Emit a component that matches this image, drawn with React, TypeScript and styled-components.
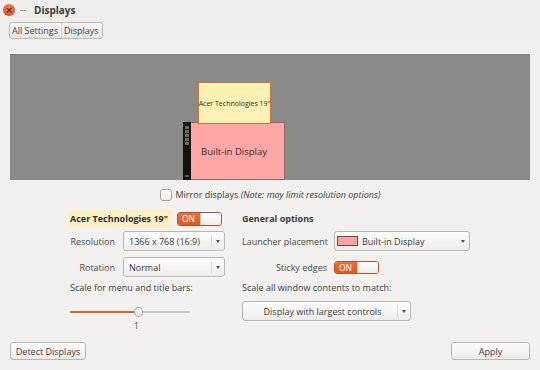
import React from 'react';
import styled, { createGlobalStyle } from 'styled-components';

const Global = createGlobalStyle`
  html, body { margin: 0; padding: 0; background: #f2f1f0; }
  body {
    font-family: "Open Sans", "Noto Sans", sans-serif;
    font-size: 9px;
    color: #3c3c3c;
  }
  * { box-sizing: border-box; }
`;

const Window = styled.div`
  width: 540px;
  height: 370px;
  background: #f2f1f0;
  display: flex;
  flex-direction: column;
  overflow: hidden;
`;

const TitleBar = styled.div`
  height: 20px;
  display: flex;
  align-items: center;
  padding-left: 3px;
  background: #efeeec;
`;

const CloseBtn = styled.div`
  width: 12px;
  height: 12px;
  border-radius: 50%;
  background: radial-gradient(circle at 50% 35%, #f58a62, #e0522a 70%, #c8461f);
  color: #6b1d0a;
  font-size: 9px;
  line-height: 12px;
  text-align: center;
  font-family: "DejaVu Sans", sans-serif;
  font-weight: bold;
`;

const MinBtn = styled.div`
  width: 6px;
  height: 1px;
  background: #9a9894;
  margin-left: 5px;
`;

const Title = styled.div`
  margin-left: 8px;
  font-weight: 700;
  font-size: 10px;
  color: #3c3c3c;
`;

const Toolbar = styled.div`
  height: 20px;
  display: flex;
  align-items: center;
  padding: 0 9px;
  background: #efeeec;
`;

const Crumbs = styled.div`
  display: flex;
  height: 17px;
  border: 1px solid #bdbab5;
  border-radius: 3px;
  background: linear-gradient(#f7f6f5, #e9e7e4);
  overflow: hidden;
`;

const Crumb = styled.div`
  padding: 0 3px 0 2px;
  display: flex;
  align-items: center;
  font-size: 9px;
  color: #3c3c3c;
  & + & { border-left: 1px solid #d6d3cf; }
`;

const Canvas = styled.div`
  position: relative;
  margin: 13px 10px 0;
  height: 127px;
  background: #8a8a89;
  border-top: 1px solid #fbfbfa;
  box-shadow: inset 0 1px 0 #7b7b7a;
`;

const Monitor = styled.div<{ $x: number; $y: number; $w: number; $h: number; $bg: string; $border: string; $z: number }>`
  position: absolute;
  left: ${(p) => p.$x}px;
  top: ${(p) => p.$y}px;
  width: ${(p) => p.$w}px;
  height: ${(p) => p.$h}px;
  background: ${(p) => p.$bg};
  border: 1px solid ${(p) => p.$border};
  z-index: ${(p) => p.$z};
  display: flex;
  align-items: center;
  justify-content: center;
`;

const MonitorLabel = styled.span<{ $size: number }>`
  font-size: ${(p) => p.$size}px;
  color: #3a2a22;
  white-space: nowrap;
`;

const LauncherStrip = styled.svg`
  position: absolute;
  left: -1px;
  top: -1px;
`;

const MirrorRow = styled.div`
  margin-top: 8px;
  height: 13px;
  display: flex;
  align-items: center;
  justify-content: center;
  gap: 4px;
`;

const CheckBox = styled.div`
  width: 12px;
  height: 12px;
  border: 1px solid #a9a6a1;
  border-radius: 3px;
  background: linear-gradient(#ffffff, #ecebe9);
`;

const MirrorText = styled.span`
  color: #3c3c3c;
  em { font-style: italic; }
`;

const Options = styled.div`
  display: flex;
  margin-top: 9px;
  padding-left: 68px;
  gap: 17px;
`;

const Column = styled.div<{ $w: number }>`
  width: ${(p) => p.$w}px;
  display: flex;
  flex-direction: column;
`;

const HeadRow = styled.div`
  height: 17px;
  display: flex;
  align-items: center;
`;

const Highlight = styled.div`
  height: 17px;
  width: 104px;
  padding-left: 2px;
  display: flex;
  align-items: center;
  background: linear-gradient(90deg, #fbf1c6, #fbf0c2);
  font-weight: 700;
  font-size: 9px;
  color: #2e2e2e;
`;

const Heading = styled.div`
  font-weight: 700;
  font-size: 9px;
  color: #3c3c3c;
`;

const Switch = styled.div<{ $ml: number; $h: number }>`
  margin-left: ${(p) => p.$ml}px;
  width: 45px;
  height: ${(p) => p.$h}px;
  display: flex;
  border-radius: 3px;
  overflow: hidden;
  border: 1px solid #b5532a;
`;

const SwitchOn = styled.div`
  width: 22px;
  background: linear-gradient(#e8703d, #d95b26);
  color: #fff;
  font-size: 8.5px;
  display: flex;
  align-items: center;
  padding-left: 4px;
`;

const SwitchKnob = styled.div`
  flex: 1;
  background: linear-gradient(#ffffff, #ecebe9);
  border-left: 1px solid #c4c1bc;
`;

const FieldRow = styled.div<{ $labelW: number; $gap: number; $mt: number }>`
  margin-top: ${(p) => p.$mt}px;
  height: 20px;
  display: grid;
  grid-template-columns: ${(p) => p.$labelW}px auto;
  column-gap: ${(p) => p.$gap}px;
  align-items: center;
`;

const Label = styled.div`
  text-align: right;
  color: #4a4a4a;
  white-space: nowrap;
`;

const Combo = styled.div<{ $w: number }>`
  width: ${(p) => p.$w}px;
  height: 20px;
  border: 1px solid #b9b6b1;
  border-radius: 3px;
  background: linear-gradient(#fdfdfc, #eeedeb);
  box-shadow: 0 1px 0 rgba(255, 255, 255, 0.8);
  display: flex;
  align-items: center;
  padding-left: 5px;
  color: #3c3c3c;
`;

const ComboText = styled.div<{ $center?: boolean }>`
  flex: 1;
  white-space: nowrap;
  text-align: ${(p) => (p.$center ? 'center' : 'left')};
`;

const ComboSep = styled.div`
  width: 1px;
  height: 12px;
  background: #dad7d3;
`;

const Arrow = styled.div`
  width: 12px;
  height: 20px;
  display: flex;
  align-items: center;
  justify-content: center;
  &::after {
    content: '';
    width: 0;
    height: 0;
    border-left: 2.5px solid transparent;
    border-right: 2.5px solid transparent;
    border-top: 3px solid #505050;
    margin-top: 1px;
  }
`;

const Swatch = styled.div`
  width: 21px;
  height: 10px;
  margin-left: -3px;
  margin-right: 4px;
  background: #f9a2a6;
  border: 1px solid #6b4a4c;
`;

const PlainLabel = styled.div<{ $mt: number; $pl: number }>`
  margin-top: ${(p) => p.$mt}px;
  padding-left: ${(p) => p.$pl}px;
  height: 12px;
  line-height: 12px;
  color: #3c3c3c;
  white-space: nowrap;
`;

const Slider = styled.div`
  margin-top: 14px;
  margin-left: 2px;
  position: relative;
  width: 120px;
  height: 8px;
  display: flex;
  align-items: center;
`;

const Track = styled.div`
  width: 100%;
  height: 2px;
  background: #c9c6c2;
  border-radius: 1px;
  overflow: hidden;
`;

const Fill = styled.div`
  height: 100%;
  background: #d5663a;
`;

const Handle = styled.div`
  position: absolute;
  top: -1px;
  width: 9px;
  height: 10px;
  border-radius: 50%;
  border: 1px solid #a8a5a0;
  background: linear-gradient(#ffffff, #e7e5e2);
`;

const SliderValue = styled.div`
  margin-top: 4px;
  padding-left: 66px;
  font-size: 8.5px;
  color: #4a4a4a;
`;

const Footer = styled.div`
  margin-top: auto;
  padding: 0 10px 10px;
  display: flex;
  justify-content: space-between;
`;

const Button = styled.div<{ $w: number }>`
  width: ${(p) => p.$w}px;
  height: 18px;
  border: 1px solid #b9b6b1;
  border-radius: 3px;
  background: linear-gradient(#fdfdfc, #eceae7);
  display: flex;
  align-items: center;
  justify-content: center;
  color: #3c3c3c;
`;

export default function App() {
  const sliderPct = 56;
  return (
    <>
      <Global />
      <Window>
        <TitleBar>
          <CloseBtn>×</CloseBtn>
          <MinBtn />
          <Title>Displays</Title>
        </TitleBar>
        <Toolbar>
          <Crumbs>
            <Crumb>All Settings</Crumb>
            <Crumb>Displays</Crumb>
          </Crumbs>
        </Toolbar>
        <Canvas>
          <Monitor $x={188} $y={28} $w={73} $h={42} $bg="#fdf1b4" $border="#c5753f" $z={2}>
            <MonitorLabel $size={7}>Acer Technologies 19"</MonitorLabel>
          </Monitor>
          <Monitor $x={173} $y={68} $w={102} $h={58} $bg="#ffa6a6" $border="#8a6a62" $z={1}>
            <LauncherStrip width="8" height="58" viewBox="0 0 8 58">
              <rect x="0" y="0" width="8" height="58" fill="#111" />
              {[4, 8, 12, 16, 20].map((y) => (
                <rect key={y} x="2" y={y} width="4" height="3" fill="#6b6b6b" />
              ))}
              <rect x="2" y="53" width="4" height="2" fill="#5a5a5a" />
            </LauncherStrip>
            <MonitorLabel $size={9.5}>Built-in Display</MonitorLabel>
          </Monitor>
        </Canvas>
        <MirrorRow>
          <CheckBox />
          <MirrorText>
            Mirror displays <em>(Note: may limit resolution options)</em>
          </MirrorText>
        </MirrorRow>
        <Options>
          <Column $w={157}>
            <HeadRow>
              <Highlight>Acer Technologies 19"</Highlight>
              <Switch $ml={5} $h={14}>
                <SwitchOn>ON</SwitchOn>
                <SwitchKnob />
              </Switch>
            </HeadRow>
            <FieldRow $labelW={47} $gap={8} $mt={4}>
              <Label>Resolution</Label>
              <Combo $w={102}>
                <ComboText>1366 x 768 (16:9)</ComboText>
                <ComboSep />
                <Arrow />
              </Combo>
            </FieldRow>
            <FieldRow $labelW={47} $gap={8} $mt={6}>
              <Label>Rotation</Label>
              <Combo $w={102}>
                <ComboText>Normal</ComboText>
                <ComboSep />
                <Arrow />
              </Combo>
            </FieldRow>
            <PlainLabel $mt={5} $pl={2}>Scale for menu and title bars:</PlainLabel>
            <Slider>
              <Track>
                <Fill style={{ width: `${sliderPct}%` }} />
              </Track>
              <Handle style={{ left: `${sliderPct - 3}%` }} />
            </Slider>
            <SliderValue>1</SliderValue>
          </Column>
          <Column $w={230}>
            <HeadRow>
              <Heading>General options</Heading>
            </HeadRow>
            <FieldRow $labelW={85} $gap={7} $mt={4}>
              <Label>Launcher placement</Label>
              <Combo $w={136}>
                <Swatch />
                <ComboText>Built-in Display</ComboText>
                <Arrow />
              </Combo>
            </FieldRow>
            <FieldRow $labelW={85} $gap={7} $mt={6}>
              <Label>Sticky edges</Label>
              <Switch $ml={0} $h={13}>
                <SwitchOn>ON</SwitchOn>
                <SwitchKnob />
              </Switch>
            </FieldRow>
            <PlainLabel $mt={5} $pl={0}>Scale all window contents to match:</PlainLabel>
            <FieldRow $labelW={0} $gap={0} $mt={7}>
              <span />
              <Combo $w={169}>
                <ComboText $center>Display with largest controls</ComboText>
                <ComboSep />
                <Arrow />
              </Combo>
            </FieldRow>
          </Column>
        </Options>
        <Footer>
          <Button $w={76}>Detect Displays</Button>
          <Button $w={79}>Apply</Button>
        </Footer>
      </Window>
    </>
  );
}
